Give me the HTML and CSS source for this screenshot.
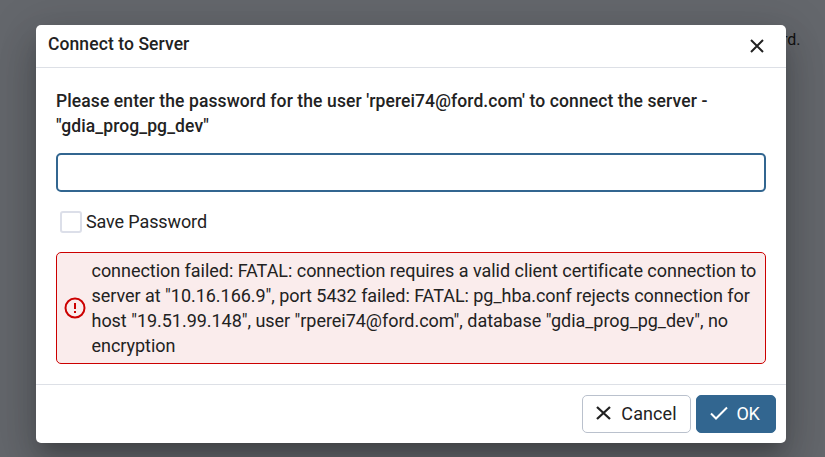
FILE: index.html
```html
<!DOCTYPE html>
<html lang="en">
<head>
<meta charset="utf-8">
<title>Connect to Server</title>
<link rel="stylesheet" href="styles.css">
</head>
<body>
<span class="backdrop-text">rd.</span>
<div class="dialog" role="dialog" aria-labelledby="title">
  <header class="header">
    <h1 class="title" id="title">Connect to Server</h1>
    <button class="close" type="button" aria-label="Close"><svg width="14" height="14" viewBox="0 0 14 14"><path d="M1 1 13 13M13 1 1 13"/></svg></button>
  </header>
  <main class="content">
    <label class="prompt" for="password">Please enter the password for the user 'rperei74@ford.com' to connect the server -<br>"gdia_prog_pg_dev"</label>
    <input class="password" id="password" type="password">
    <label class="save"><input class="check" type="checkbox"><span>Save Password</span></label>
    <div class="error" role="alert">
      <svg class="error-icon" width="22" height="22" viewBox="0 0 22 22"><circle cx="11" cy="11" r="9.5"/><path d="M11 6v6M11 14v2"/></svg>
      <p class="message">connection failed: FATAL: connection requires a valid client certificate connection to<br>server at "10.16.166.9", port 5432 failed: FATAL: pg_hba.conf rejects connection for<br>host "19.51.99.148", user "rperei74@ford.com", database "gdia_prog_pg_dev", no<br>encryption</p>
    </div>
  </main>
  <footer class="footer">
    <button class="button" type="button"><svg width="15" height="14" viewBox="0 0 15 14"><path stroke-width="2.3" d="M1 1 14 13M14 1 1 13"/></svg><span>Cancel</span></button>
    <button class="button primary" type="button"><svg width="18" height="14" viewBox="0 0 18 14"><path d="M1 7.5 6 12.5 17 1.5"/></svg><span>OK</span></button>
  </footer>
</div>
</body>
</html>
```
FILE: styles.css
```css
* { box-sizing: border-box; }
body {
  margin: 0;
  height: 457px;
  overflow: hidden;
  padding: 25px 39px 0 36px;
  background: #64676c;
  color: #222;
  font-family: Roboto, sans-serif;
  font-size: 18px;
}
button { font: inherit; color: inherit; }
svg { fill: none; stroke: currentColor; stroke-width: 2; flex: none; }
.backdrop-text { position: absolute; left: 782px; top: 30px; color: #111; font-size: 16px; line-height: 20px; }
.dialog {
  position: relative;
  display: flex;
  flex-direction: column;
  height: 418px;
  background: #fff;
  border-radius: 5px;
  box-shadow:
    0 11px 15px -7px rgba(0, 0, 0, 0.2),
    0 24px 38px 3px rgba(0, 0, 0, 0.14),
    0 9px 46px 8px rgba(0, 0, 0, 0.12);
}
.header {
  display: flex;
  align-items: center;
  justify-content: space-between;
  height: 43px;
  padding: 0 22px 0 12px;
  border-bottom: 1px solid #dde0e6;
}
.title {
  margin: 0 0 4px;
  font-size: 17.5px;
  font-weight: 500;
  line-height: 24px;
  letter-spacing: 0.09px;
}
.close { display: flex; padding: 0; border: 0; background: none; }
.content { flex: 1; padding: 21px 20px 0; }
.prompt {
  display: block;
  font-size: 17.5px;
  font-weight: 500;
  line-height: 25px;
  letter-spacing: 0.1px;
  white-space: nowrap;
}
.password {
  display: block;
  width: 710px;
  height: 39px;
  margin: 14px 0 0;
  border: 2px solid #326690;
  border-radius: 5px;
  outline: 0;
}
.save {
  display: flex;
  align-items: center;
  gap: 4px;
  height: 25px;
  margin: 17px 0 18px 4px;
  letter-spacing: -0.12px;
}
.check {
  appearance: none;
  width: 22px;
  height: 22px;
  margin: 0;
  border: 2px solid #dcdfe9;
  border-radius: 3px;
}
.error {
  display: flex;
  align-items: center;
  gap: 6px;
  height: 112px;
  padding: 0 6.5px;
  border: 1px solid #cc0000;
  border-radius: 5px;
  background: #faecec;
}
.error-icon { color: #cc0000; }
.message { margin: 0; line-height: 25px; letter-spacing: -0.035px; white-space: nowrap; }
.footer {
  display: flex;
  justify-content: flex-end;
  gap: 5px;
  height: 59px;
  padding: 10px 10px 0 0;
  border-top: 1px solid #dde0e6;
}
.button {
  display: flex;
  align-items: center;
  justify-content: center;
  gap: 10px;
  width: 109px;
  height: 38px;
  padding: 0 0 2px;
  border: 1px solid #bac1cd;
  border-radius: 5px;
  background: #fff;
  letter-spacing: 0.08px;
}
.primary {
  width: 80px;
  padding-right: 3px;
  gap: 9px;
  border-color: #326690;
  background: #326690;
  color: #fff;
  letter-spacing: -0.4px;
}
```
